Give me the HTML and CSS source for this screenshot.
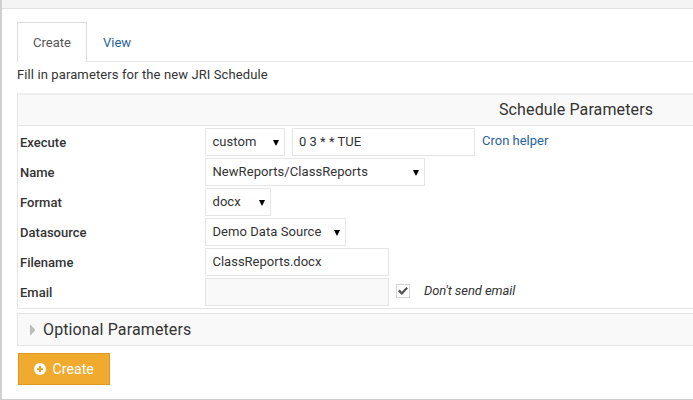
FILE: index.html
```html
<!DOCTYPE html>
<html lang="en">
<head>
<meta charset="utf-8">
<title>JRI Schedule</title>
<link rel="stylesheet" href="styles.css">
</head>
<body>
<div class="panel">
  <div class="panel-head"></div>
  <div class="panel-body">
    <nav class="tabs">
      <a class="tab active">Create</a>
      <a class="tab">View</a>
    </nav>
    <p class="intro">Fill in parameters for the new JRI Schedule</p>
    <section class="params">
      <h2 class="params-title">Schedule Parameters</h2>
      <div class="rows">
        <div class="row">
          <label>Execute</label>
          <div class="field select w-custom"><span>custom</span><svg class="arrow" viewBox="0 0 6 6"><path d="M0 0h6L3.3 5.6H2.7z"/></svg></div>
          <div class="field w-cron"><span>0 3 * * TUE</span></div>
          <a class="helper">Cron helper</a>
        </div>
        <div class="row">
          <label>Name</label>
          <div class="field select w-name"><span>NewReports/ClassReports</span><svg class="arrow" viewBox="0 0 6 6"><path d="M0 0h6L3.3 5.6H2.7z"/></svg></div>
        </div>
        <div class="row">
          <label>Format</label>
          <div class="field select w-format"><span>docx</span><svg class="arrow" viewBox="0 0 6 6"><path d="M0 0h6L3.3 5.6H2.7z"/></svg></div>
        </div>
        <div class="row">
          <label>Datasource</label>
          <div class="field select w-source"><span>Demo Data Source</span><svg class="arrow" viewBox="0 0 6 6"><path d="M0 0h6L3.3 5.6H2.7z"/></svg></div>
        </div>
        <div class="row">
          <label>Filename</label>
          <div class="field w-file"><span>ClassReports.docx</span></div>
        </div>
        <div class="row">
          <label>Email</label>
          <div class="field w-file disabled"></div>
          <span class="check"><svg viewBox="0 0 10 8"><path d="M0 4.2 1.6 2.6 3.8 4.7 8.4 0 10 1.6 3.8 8z"/></svg></span>
          <em class="no-mail">Don't send email</em>
        </div>
      </div>
    </section>
    <section class="optional">
      <svg class="caret" viewBox="0 0 5 10"><path d="M0 0h.8L5 4.5v1L.8 10H0z"/></svg>
      <span>Optional Parameters</span>
    </section>
    <button class="create" type="button">
      <svg viewBox="0 0 12 12"><circle cx="6" cy="6" r="6" fill="#fff"/><path d="M5 3h2v2h2v2H7v2H5V7H3V5h2z" fill="#f0ab2e"/></svg>
      <span>Create</span>
    </button>
  </div>
</div>
</body>
</html>
```
FILE: styles.css
```css
* { box-sizing: border-box; }
body {
  margin: 0;
  background: #fff;
  color: #333;
  font: 13px/20px Roboto, sans-serif;
  white-space: nowrap;
}
svg { display: block; flex: none; }
.panel {
  height: 400px;
  border-left: 2px solid #d0d0d0;
  border-bottom: 1px solid #ccc;
}
.panel-head {
  height: 9px;
  background: #f4f4f4;
  border-bottom: 1px solid #e2e2e2;
}
.panel-body { padding: 13px 0 0 15px; }
.tabs {
  display: flex;
  height: 40px;
  border-bottom: 1px solid #e5e5e5;
}
.tab {
  height: 40px;
  padding: 10px 15px 0;
  border: 1px solid transparent;
  border-bottom: 0;
  color: #2a5f9e;
}
.tab.active {
  width: 70px;
  background: #fff;
  border-color: #ddd;
  color: #555;
}
.intro { margin: 0; height: 31px; padding-top: 3px; letter-spacing: 0.11px; }
.params {
  height: 216px;
  border: 1px solid #e5e5e5;
  border-top: 2px solid #eee;
  border-right: 0;
}
.params-title {
  margin: 0;
  height: 31px;
  padding-left: 481px;
  background: #f9f9f9;
  border-bottom: 1px solid #e5e5e5;
  font-size: 16px;
  font-weight: 400;
  line-height: 29px;
  letter-spacing: 0.12px;
}
.rows { padding: 2px 0 0 2px; }
.row { display: flex; height: 30px; align-items: flex-start; }
.row label { width: 185px; padding-top: 5px; font-weight: 500; letter-spacing: 0.02px; }
.field {
  display: flex;
  height: 28px;
  padding: 0 5px 0 6px;
  border: 1px solid #e5e5e5;
  background: #fff;
  line-height: 26px;
}
.select { justify-content: space-between; }
.select span { margin-left: 0.5px; letter-spacing: 0.06px; }
.arrow { width: 6px; height: 6px; margin-top: 11px; fill: #000; }
.w-custom { width: 80px; }
.w-cron { width: 183px; margin-left: 7px; }
.w-name { width: 220px; }
.w-format { width: 66px; }
.w-source { width: 141px; }
.w-file { width: 184px; }
.w-file span { margin-left: 0.5px; }
.disabled { background: #f9f9f9; }
.helper { margin-left: 7px; padding-top: 3px; color: #2a5f9e; }
.check {
  width: 14px;
  height: 14px;
  margin: 6px 0 0 7px;
  padding: 2px 1px;
  border: 1px solid #d5d5d5;
}
.check svg { width: 10px; height: 8px; fill: #555; }
.no-mail { margin-left: 14px; padding-top: 3px; letter-spacing: -0.07px; }
.optional {
  display: flex;
  align-items: center;
  height: 33px;
  margin-top: 4px;
  padding-left: 12px;
  background: #f9f9f9;
  border: 1px solid #e5e5e5;
  border-right: 0;
  font-size: 16px;
  letter-spacing: 0.12px;
}
.caret { width: 5px; height: 10px; margin-right: 8px; fill: #bbb; }
.create {
  display: flex;
  align-items: center;
  width: 92px;
  height: 32px;
  margin: 7px 0 0 1px;
  padding: 0 0 0 15px;
  background: #f0ab2e;
  border: 1px solid #de981f;
  color: #fff;
  font: 14px/20px Roboto, sans-serif;
}
.create svg { width: 12px; height: 12px; margin-right: 6.5px; }
.create span { letter-spacing: 0.1px; }
```
